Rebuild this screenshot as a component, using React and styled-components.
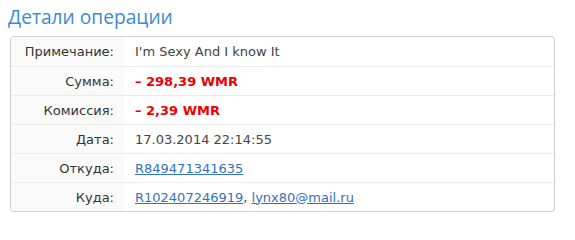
import React from 'react';
import styled, { createGlobalStyle } from 'styled-components';

const GlobalStyle = createGlobalStyle`
  body {
    margin: 0;
    background: #fff;
    font-family: "DejaVu Sans", Verdana, sans-serif;
  }
`;

const Page = styled.div`
  padding: 4px 20px 0 8px;
  width: 575px;
  box-sizing: border-box;
`;

const Title = styled.h2`
  margin: 0 0 7px 0;
  font-family: "Open Sans", "Noto Sans", sans-serif;
  font-weight: 400;
  font-size: 19.2px;
  line-height: 25px;
  color: #3d8bd0;
`;

const Box = styled.div`
  margin-left: 2px;
  border: 1px solid #cfcfcf;
  border-radius: 4px;
  overflow: hidden;
  box-shadow: 0 1px 1px rgba(0, 0, 0, 0.06);
`;

const Row = styled.div`
  display: grid;
  grid-template-columns: 113px 1fr;
  height: 29px;
  border-top: ${p => (p.$first ? 'none' : '1px solid #ececec')};
  box-sizing: border-box;
  font-size: 13px;
`;

const Label = styled.div`
  display: flex;
  align-items: center;
  justify-content: flex-end;
  padding-right: 10px;
  background: #fafafa;
  color: #333;
`;

const Value = styled.div`
  display: flex;
  align-items: center;
  padding-left: 11px;
  color: ${p => (p.$red ? '#ee0000' : '#444')};
  font-weight: ${p => (p.$red ? 700 : 400)};
`;

const Link = styled.a`
  color: #3272c0;
  text-decoration: underline;
`;

const rows = [
  { label: 'Примечание:', value: "I'm Sexy And I know It" },
  { label: 'Сумма:', value: '– 298,39 WMR', red: true },
  { label: 'Комиссия:', value: '– 2,39 WMR', red: true },
  { label: 'Дата:', value: '17.03.2014 22:14:55' },
];

export default function App() {
  return (
    <>
      <GlobalStyle />
      <Page>
        <Title>Детали операции</Title>
        <Box>
          {rows.map((r, i) => (
            <Row key={r.label} $first={i === 0}>
              <Label>{r.label}</Label>
              <Value $red={r.red}>{r.value}</Value>
            </Row>
          ))}
          <Row>
            <Label>Откуда:</Label>
            <Value>
              <Link href="#">R849471341635</Link>
            </Value>
          </Row>
          <Row>
            <Label>Куда:</Label>
            <Value>
              <Link href="#">R102407246919</Link>,&nbsp;<Link href="#">lynx80@mail.ru</Link>
            </Value>
          </Row>
        </Box>
      </Page>
    </>
  );
}
